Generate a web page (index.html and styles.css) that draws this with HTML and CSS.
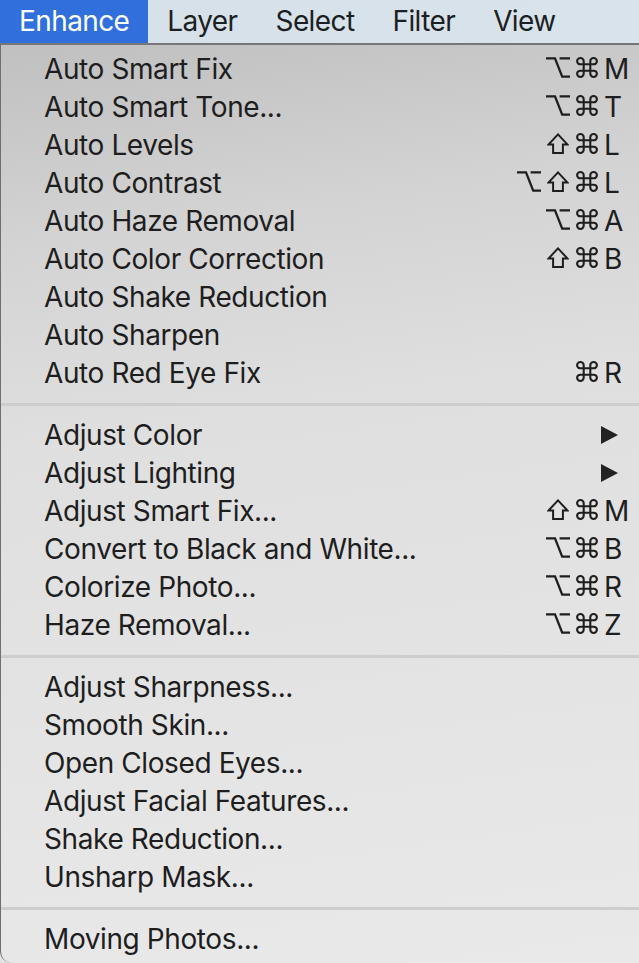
FILE: index.html
```html
<!DOCTYPE html>
<html>
<head>
<meta charset="utf-8">
<link rel="stylesheet" href="styles.css">
</head>
<body>
<svg class="defs" width="0" height="0" aria-hidden="true">
  <defs>
    <symbol id="opt" viewBox="0 0 24 21">
      <path d="M0 1.3 H9 L16.2 19.7 H24 M13.6 1.3 H24" fill="none" stroke="#1e1e1e" stroke-width="2.3"/>
    </symbol>
    <symbol id="shift" viewBox="0 0 22 21">
      <path d="M11 1.4 L20.6 11.6 H15.9 V19.9 H6.1 V11.6 H1.4 Z" fill="none" stroke="#1e1e1e" stroke-width="2" stroke-linejoin="miter"/>
    </symbol>
    <symbol id="cmd" viewBox="2 2 20 20" preserveAspectRatio="none">
      <path d="M18 3a3 3 0 0 0-3 3v12a3 3 0 0 0 3 3 3 3 0 0 0 3-3 3 3 0 0 0-3-3H6a3 3 0 0 0-3 3 3 3 0 0 0 3 3 3 3 0 0 0 3-3V6a3 3 0 0 0-3-3 3 3 0 0 0-3 3 3 3 0 0 0 3 3h12a3 3 0 0 0 3-3 3 3 0 0 0-3-3z" fill="none" stroke="#1e1e1e" stroke-width="1.9"/>
    </symbol>
  </defs>
</svg>
<div class="screen">
  <div class="menubar">
    <div class="mb-item active">Enhance</div>
    <div class="mb-item">Layer</div>
    <div class="mb-item">Select</div>
    <div class="mb-item">Filter</div>
    <div class="mb-item">View</div>
  </div>
  <div class="menu">
    <div class="row"><span class="label">Auto Smart Fix</span><span class="mods"><span class="m"><svg class="g g-opt"><use href="#opt"/></svg></span><span class="m"><svg class="g g-cmd"><use href="#cmd"/></svg></span></span><span class="key">M</span></div>
    <div class="row"><span class="label">Auto Smart Tone...</span><span class="mods"><span class="m"><svg class="g g-opt"><use href="#opt"/></svg></span><span class="m"><svg class="g g-cmd"><use href="#cmd"/></svg></span></span><span class="key">T</span></div>
    <div class="row"><span class="label">Auto Levels</span><span class="mods"><span class="m"><svg class="g g-shift"><use href="#shift"/></svg></span><span class="m"><svg class="g g-cmd"><use href="#cmd"/></svg></span></span><span class="key">L</span></div>
    <div class="row"><span class="label">Auto Contrast</span><span class="mods"><span class="m"><svg class="g g-opt"><use href="#opt"/></svg></span><span class="m"><svg class="g g-shift"><use href="#shift"/></svg></span><span class="m"><svg class="g g-cmd"><use href="#cmd"/></svg></span></span><span class="key">L</span></div>
    <div class="row"><span class="label">Auto Haze Removal</span><span class="mods"><span class="m"><svg class="g g-opt"><use href="#opt"/></svg></span><span class="m"><svg class="g g-cmd"><use href="#cmd"/></svg></span></span><span class="key">A</span></div>
    <div class="row"><span class="label">Auto Color Correction</span><span class="mods"><span class="m"><svg class="g g-shift"><use href="#shift"/></svg></span><span class="m"><svg class="g g-cmd"><use href="#cmd"/></svg></span></span><span class="key">B</span></div>
    <div class="row"><span class="label">Auto Shake Reduction</span></div>
    <div class="row"><span class="label">Auto Sharpen</span></div>
    <div class="row"><span class="label">Auto Red Eye Fix</span><span class="mods"><span class="m"><svg class="g g-cmd"><use href="#cmd"/></svg></span></span><span class="key">R</span></div>
    <div class="sep"></div>
    <div class="row"><span class="label">Adjust Color</span><span class="key"><span class="arrow"></span></span></div>
    <div class="row"><span class="label">Adjust Lighting</span><span class="key"><span class="arrow"></span></span></div>
    <div class="row"><span class="label">Adjust Smart Fix...</span><span class="mods"><span class="m"><svg class="g g-shift"><use href="#shift"/></svg></span><span class="m"><svg class="g g-cmd"><use href="#cmd"/></svg></span></span><span class="key">M</span></div>
    <div class="row"><span class="label">Convert to Black and White...</span><span class="mods"><span class="m"><svg class="g g-opt"><use href="#opt"/></svg></span><span class="m"><svg class="g g-cmd"><use href="#cmd"/></svg></span></span><span class="key">B</span></div>
    <div class="row"><span class="label">Colorize Photo...</span><span class="mods"><span class="m"><svg class="g g-opt"><use href="#opt"/></svg></span><span class="m"><svg class="g g-cmd"><use href="#cmd"/></svg></span></span><span class="key">R</span></div>
    <div class="row"><span class="label">Haze Removal...</span><span class="mods"><span class="m"><svg class="g g-opt"><use href="#opt"/></svg></span><span class="m"><svg class="g g-cmd"><use href="#cmd"/></svg></span></span><span class="key">Z</span></div>
    <div class="sep"></div>
    <div class="row"><span class="label">Adjust Sharpness...</span></div>
    <div class="row"><span class="label">Smooth Skin...</span></div>
    <div class="row"><span class="label">Open Closed Eyes...</span></div>
    <div class="row"><span class="label">Adjust Facial Features...</span></div>
    <div class="row"><span class="label">Shake Reduction...</span></div>
    <div class="row"><span class="label">Unsharp Mask...</span></div>
    <div class="sep"></div>
    <div class="row"><span class="label">Moving Photos...</span></div>
  </div>
</div>
</body>
</html>
```
FILE: styles.css
```css
html, body {
  margin: 0;
  padding: 0;
}
body {
  width: 639px;
  height: 963px;
  overflow: hidden;
  background: #e4e4e4;
  font-family: Inter, "Liberation Sans", sans-serif;
  color: #1e1e1e;
}
.defs {
  position: absolute;
  width: 0;
  height: 0;
  overflow: hidden;
}
.screen {
  width: 639px;
  height: 963px;
  display: flex;
  flex-direction: column;
}
.menubar {
  height: 43px;
  display: flex;
  background: linear-gradient(90deg, #d6e0e9 0%, #d9e3eb 100%);
  flex-shrink: 0;
}
.mb-item {
  padding: 0 19px;
  font-size: 28px;
  line-height: 43px;
  letter-spacing: -0.6px;
  color: #1b1f23;
}
.mb-item.active {
  background: #306fdc;
  color: #ffffff;
}
.menu {
  flex: 1;
  border-top: 2px solid #777777;
  border-left: 1px solid #6f6f6f;
  border-bottom-left-radius: 12px;
  padding-top: 5px;
  background: linear-gradient(172deg, #c0c0c0 0%, #d3d3d3 20%, #dfdfdf 40%, #e3e3e3 65%, #e9e9e9 100%);
}
.row {
  display: flex;
  align-items: center;
  height: 38px;
  padding-left: 43px;
  font-size: 28px;
  letter-spacing: -0.4px;
}
.label {
  flex: 1;
  white-space: nowrap;
}
.mods {
  display: flex;
  align-items: center;
  height: 38px;
}
.m {
  width: 29px;
  height: 38px;
  display: flex;
  align-items: center;
  justify-content: center;
}
.g {
  display: block;
  height: 21px;
  margin-top: -3px;
  overflow: visible;
}
.g-opt {
  width: 24px;
}
.g-shift {
  width: 22px;
}
.g-cmd {
  width: 22px;
}
.key {
  width: 35px;
  margin-left: 3px;
  display: flex;
  align-items: center;
}
.arrow {
  display: block;
  width: 0;
  height: 0;
  margin-left: -3px;
  border-top: 9px solid transparent;
  border-bottom: 9px solid transparent;
  border-left: 17px solid #222222;
}
.sep {
  height: 24px;
  display: flex;
  align-items: center;
}
.sep::before {
  content: "";
  display: block;
  width: 100%;
  height: 3px;
  background: #cdcdcd;
}
```
